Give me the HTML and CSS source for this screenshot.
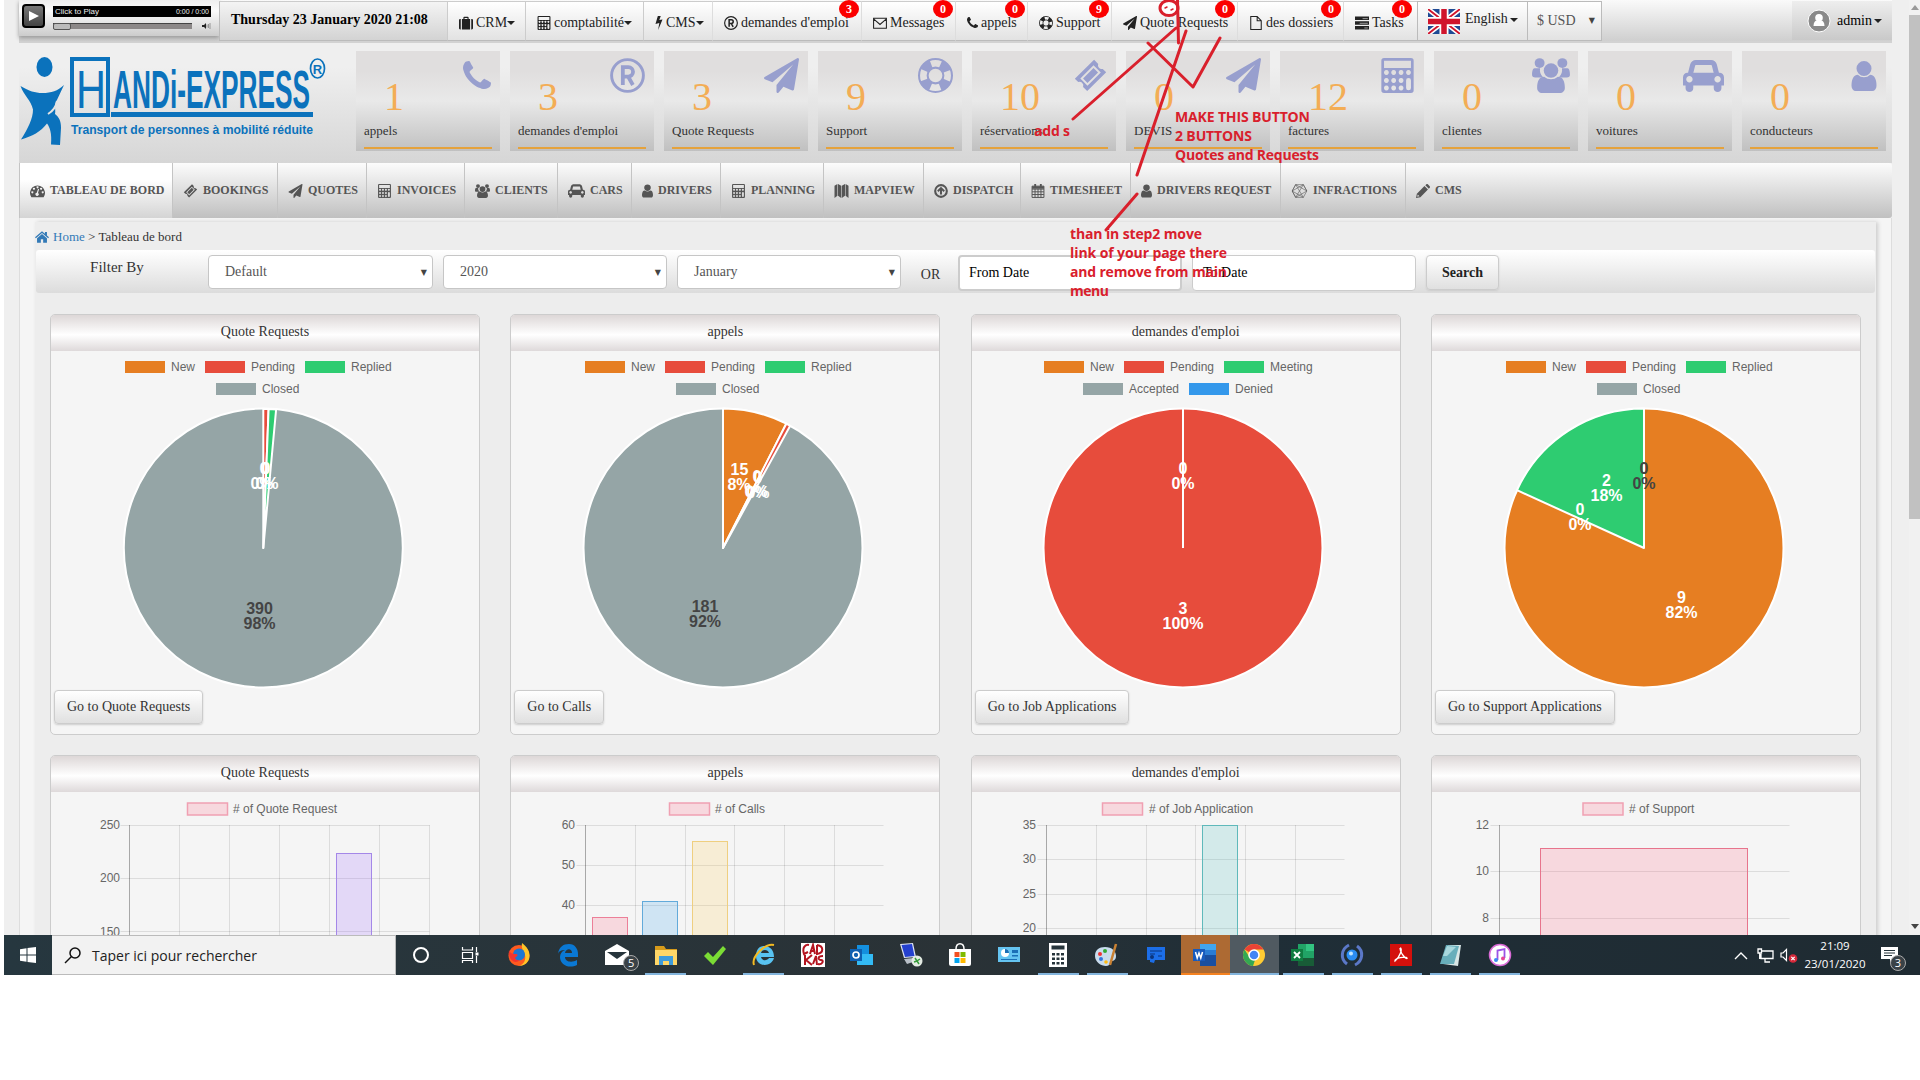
FILE: index.html
```html
<!DOCTYPE html>
<html lang="fr">
<head>
<meta charset="utf-8">
<title>Tableau de bord</title>
<link rel="stylesheet" href="styles.css">
</head>
<body>
<svg class="sprite" aria-hidden="true">
  <symbol id="phone" viewBox="192 128 1408 1408"><path d="M1600 1240q0 27-10 70.5t-21 68.5q-21 50-122 106-94 51-186 51-27 0-53-3.5t-57.5-12.5-47-14.5-55.5-20.5-49-18q-98-35-175-83-127-79-264-216t-216-264q-48-77-83-175-3-9-18-49t-20.5-55.5-14.5-47-12.5-57.5-3.5-53q0-92 51-186 56-101 106-122 25-11 68.5-21t70.5-10q14 0 21 3 18 6 53 76 11 19 30 54t35 63.5 31 53.5q3 4 17.5 25t21.5 35.5 7 28.5q0 20-28.5 50t-62 55-62 53-28.5 46q0 9 5 22.5t8.5 20.5 14 24 11.5 19q76 137 174 235t235 174q2 1 19 11.5t24 14 20.5 8.5 22.5 5q18 0 46-28.5t53-62 55-62 50-28.5q14 0 28.5 7t35.5 21.5 25 17.5q25 15 53.5 31t63.5 35 54 30q70 35 76 53 3 7 3 21z"/></symbol>
  <symbol id="plane" viewBox="0 0 1792 1792"><path d="M1764 11q33 24 27 64l-256 1536q-5 29-32 45-14 8-31 8-11 0-24-5l-453-185-242 295q-18 23-49 23-13 0-22-4-19-7-30.5-23.5t-11.5-36.5v-349l864-1059-1069 925-395-162q-37-14-40-55-2-40 32-59l1664-960q15-9 32-9 20 0 36 11z"/></symbol>
  <symbol id="user" viewBox="256 128 1280 1536"><path d="M1536 1399q0 109-62.5 187t-150.5 78h-854q-88 0-150.5-78t-62.5-187q0-85 8.5-160.5t31.5-152 58.5-131 94-89 134.5-34.5q131 128 313 128t313-128q76 0 134.5 34.5t94 89 58.5 131 31.5 152 8.5 160.5zm-256-887q0 159-112.5 271.5t-271.5 112.5-271.5-112.5-112.5-271.5 112.5-271.5 271.5-112.5 271.5 112.5 112.5 271.5z"/></symbol>
  <symbol id="car" viewBox="0 128 2048 1600"><path d="M480 1088q0-66-47-113t-113-47-113 47-47 113 47 113 113 47 113-47 47-113zm36-320h1016l-89-357q-2-8-14-17.5t-21-9.5h-768q-9 0-21 9.5t-14 17.5zm1372 320q0-66-47-113t-113-47-113 47-47 113 47 113 113 47 113-47 47-113zm160-96v384q0 14-9 23t-23 9h-96v128q0 80-56 136t-136 56-136-56-56-136v-128h-1024v128q0 80-56 136t-136 56-136-56-56-136v-128h-96q-14 0-23-9t-9-23v-384q0-93 65.5-158.5t158.5-65.5h28l105-419q23-94 104-157.5t179-63.5h768q98 0 179 63.5t104 157.5l105 419h28q93 0 158.5 65.5t65.5 158.5z"/></symbol>
  <symbol id="reg" viewBox="0 0 24 24"><circle cx="12" cy="12" r="10.9" fill="none" stroke="currentColor" stroke-width="2"/><path fill="none" stroke="currentColor" stroke-width="2.6" d="M8.8 18.5V6.3h3.8a3 3 0 0 1 0 6.4H8.8M12.4 12.7l3.3 5.8"/></symbol>
  <symbol id="ring" viewBox="0 0 24 24"><circle cx="12" cy="12" r="11.3" fill="none" stroke="currentColor" stroke-width="1.4"/><circle cx="12" cy="12" r="5.4" fill="none" stroke="currentColor" stroke-width="1.4"/><circle cx="12" cy="12" r="8.4" fill="none" stroke="currentColor" stroke-width="6" stroke-dasharray="6.6 6.594" stroke-dashoffset="-3.3"/></symbol>
  <symbol id="ticket" viewBox="0 0 24 24"><path fill-rule="evenodd" d="M14.6.6l3 3a2.7 2.7 0 0 0 3.3 3.6l2.5 2.4L9.6 23.3l-3-3a2.7 2.7 0 0 0-3.5-3.5L.6 14.3zM14.2 4.6L4.6 14.2l5.2 5.3 9.7-9.7zM14.2 6.6l3.3 3.2-7.7 7.7-3.2-3.3z"/></symbol>
  <symbol id="calc" viewBox="0 0 24 26"><path fill-rule="evenodd" d="M2 0h20a2 2 0 0 1 2 2v22a2 2 0 0 1-2 2H2a2 2 0 0 1-2-2V2a2 2 0 0 1 2-2zM2 2v5.4h20V2zM3.7 9a1.8 1.8 0 1 0 .1 0zM9.1 9a1.8 1.8 0 1 0 .1 0zM14.6 9a1.8 1.8 0 1 0 .1 0zM20.1 9a1.8 1.8 0 1 0 .1 0zM3.7 14.9a1.8 1.8 0 1 0 .1 0zM9.1 14.9a1.8 1.8 0 1 0 .1 0zM14.6 14.9a1.8 1.8 0 1 0 .1 0zM18.4 16.6a1.8 1.8 0 0 1 3.6 0v5.6a1.8 1.8 0 0 1-3.6 0zM3.7 20.5a1.8 1.8 0 1 0 .1 0zM9.1 20.5a1.8 1.8 0 1 0 .1 0zM14.6 20.5a1.8 1.8 0 1 0 .1 0z"/></symbol>
  <symbol id="group" viewBox="0 0 26 24"><circle cx="5.2" cy="3.5" r="3.4"/><circle cx="20.8" cy="3.5" r="3.4"/><path d="M1.700 7h3.800a7 7 0 0 0 2.200 6.300H2.200C.8 13.300 0 12.600 0 11.400 0 9.300.5 7 1.700 7zM24.300 7h-3.800a7 7 0 0 1-2.200 6.300h5.500c1.400 0 2.200-.7 2.200-1.900 0-2.100-.5-4.400-1.700-4.400z"/><circle cx="13" cy="8.600" r="5"/><path d="M8.300 12.800c2.700 2.300 6.700 2.300 9.400 0 3.500 0 4.800 3.200 4.800 7.600 0 2.200-1.400 3.600-3.500 3.600H7c-2.100 0-3.500-1.400-3.500-3.600 0-4.400 1.300-7.600 4.800-7.600z"/></symbol>
  <symbol id="case" viewBox="0 0 24 22"><path fill-rule="evenodd" d="M0 6a2 2 0 0 1 2-2h1v18H2a2 2 0 0 1-2-2zM5 4h2.500V2A1.700 1.700 0 0 1 9.200.3h5.600A1.700 1.700 0 0 1 16.500 2v2H19v18H5zM9.500 2.300V4h5V2.300zM21 4h1a2 2 0 0 1 2 2v14a2 2 0 0 1-2 2h-1z"/></symbol>
  <symbol id="bolt" viewBox="0 0 12 24"><path d="M4 0h5L6.500 7 12 5.800 4.500 24l2-12L0 13.500z"/></symbol>
  <symbol id="mail" viewBox="0 0 24 20"><path fill="none" stroke="currentColor" stroke-width="1.800" d="M1 2h22v17H1zM1 3l11 9.500L23 3"/></symbol>
  <symbol id="file" viewBox="0 0 20 24"><path fill="none" stroke="currentColor" stroke-width="1.800" d="M1 1h11l7 7v15H1zM12 1v7h7"/></symbol>
  <symbol id="tasks" viewBox="0 0 24 22"><path d="M0 0h24v6H0zM0 8h24v6H0zM0 16h24v6H0z"/><path stroke="#eee" d="M13 3.500h9M8 11.500h14M16 19.500h6"/></symbol>
  <symbol id="gauge" viewBox="0 0 24 21"><path fill-rule="evenodd" d="M2.200 20.500A12 12 0 1 1 21.800 20.500zM3.700 11a1.600 1.600 0 1 0 .1 0zM6.300 5.300a1.600 1.600 0 1 0 .1 0zM12 2.800a1.600 1.600 0 1 0 .1 0zM17.700 5.300a1.600 1.600 0 1 0 .1 0zM20.300 11a1.600 1.600 0 1 0 .1 0zM13 7l-2.200 6.200a2.600 2.600 0 1 0 2 .4L14.500 7.500z"/></symbol>
  <symbol id="map" viewBox="0 0 24 24"><path d="M0 3l5-3v20l-5 4zM6 0l5.500 3v21L6 20zM12.500 3L18 0v20l-5.500 4zM19 0l5 3v21l-5-4z"/></symbol>
  <symbol id="up" viewBox="0 0 24 24"><circle cx="12" cy="12" r="10" fill="none" stroke="currentColor" stroke-width="3.600"/><path fill="none" stroke="currentColor" stroke-width="3.400" d="M6.500 12.500L12 7l5.500 5.500M12 8v10"/></symbol>
  <symbol id="cal" viewBox="0 0 24 26"><path fill="none" stroke="currentColor" stroke-width="1.800" d="M1 4h22v21H1zM1 9.500h22M1 14.500h22M1 19.500h22M6.500 9v16M12 9v16M17.500 9v16"/><path d="M1 4h22v5H1zM5 0h3.500v7H5zM15.500 0H19v7h-3.500z"/></symbol>
  <symbol id="hex" viewBox="0 0 24 22"><path fill="none" stroke="currentColor" stroke-width=".9" d="M6 1h12l5.500 10L18 21H6L.5 11zM6 1l12 20M18 1L6 21M.5 11L18 1l5.500 10L6 21zM6 1L.5 11 18 21M6 1l17.500 10"/></symbol>
  <symbol id="pencil" viewBox="0 0 24 24"><path fill-rule="evenodd" d="M0 24l1.500-7.500L14.500 3.500l6 6-13 13zM16 2l1.700-1.500a2 2 0 0 1 2.600 0l3.200 3.200a2 2 0 0 1 0 2.600L22 8zM3 18l-1 4 4-1z"/></symbol>
  <symbol id="home" viewBox="0 0 24 20"><path d="M12 0l5 4.300V1.500h3.500v5.800L24 10.500l-1.500 1.600L12 3 1.500 12.100 0 10.500zM12 5l8.500 7.300V20H14v-6h-4v6H3.500v-7.700z"/></symbol>
</svg>

<div class="desktop">
  <div class="browser">
    <div class="page">
      <div class="topbar">
        <div class="player">
          <span class="play"></span>
          <div class="deck">
            <div class="display"><span>Click to Play</span><span>0:00 / 0:00</span></div>
            <div class="track"><span class="rail"><i></i></span><svg width="9" height="8" viewBox="0 0 9 8"><path d="M0 3h2l2-2v6L2 5H0z" fill="#222"/><path d="M5 2.500v3M6.500 2v4M8 1v6" stroke="#777" stroke-width=".7"/></svg></div>
          </div>
        </div>
        <div class="date">Thursday 23 January 2020 21:08</div>
        <a class="item"><svg class="ic"><use href="#case"/></svg>CRM<b class="caret"></b></a>
        <a class="item"><svg class="ic"><use href="#calc"/></svg>comptabilité<b class="caret"></b></a>
        <a class="item"><svg class="ic thin"><use href="#bolt"/></svg>CMS<b class="caret"></b></a>
        <a class="item soft"><svg class="ic"><use href="#reg"/></svg>demandes d'emploi<em>3</em></a>
        <a class="item soft"><svg class="ic"><use href="#mail"/></svg>Messages<em>0</em></a>
        <a class="item soft"><svg class="ic small"><use href="#phone"/></svg>appels<em>0</em></a>
        <a class="item soft"><svg class="ic"><use href="#ring"/></svg>Support<em>9</em></a>
        <a class="item soft"><svg class="ic"><use href="#plane"/></svg>Quote Requests<em>0</em></a>
        <a class="item soft"><svg class="ic"><use href="#file"/></svg>des dossiers<em>0</em></a>
        <a class="item soft"><svg class="ic"><use href="#tasks"/></svg>Tasks<em class="in">0</em></a>
        <a class="item lang"><svg class="flag" viewBox="0 0 32 25"><path fill="#1f4a94" d="M0 0h32v25H0z"/><path stroke="#fff" stroke-width="5" d="M0 0l32 25M32 0L0 25"/><path stroke="#d0142c" stroke-width="1.800" d="M0 0l32 25M32 0L0 25"/><path stroke="#fff" stroke-width="9" d="M16 0v25M0 12.500h32"/><path stroke="#d0142c" stroke-width="5.500" d="M16 0v25M0 12.500h32"/></svg><span>English<b class="caret"></b></span></a>
        <a class="item usd">$ USD<i>▼</i></a>
        <span></span>
        <a class="admin"><svg width="24" height="24" viewBox="0 0 24 24"><circle cx="12" cy="12" r="11" fill="#8a8a8a" stroke="#fff"/><circle cx="12" cy="8.700" r="3.800" fill="#fff"/><path fill="#fff" d="M6.500 17c0-3.500 1.500-5.500 3.500-5.500h4c2 0 3.500 2 3.500 5.500z"/></svg>admin<b class="caret"></b></a>
      </div>

      <div class="header">
        <svg class="logo" viewBox="0 0 310 100" width="310" height="100" fill="#0b72bc">
          <ellipse cx="25.500" cy="17" rx="8" ry="10"/>
          <path d="M1.500 36c9 5 14 7 22 7 9 0 15-2 21.500-8l-8 17c-2 5 0 8-1 12 4 3 6 7 6 14l-1 17-9-.500c1-11-1-17-4-21-6 8-15 13-26 16 7-11 12-21 12-30C12 50 5 46 1.500 36z"/>
          <path d="M38 51c-1 6-4 10-9 13" fill="none" stroke="#e4e4e4" stroke-width="2"/>
          <path d="M53 9h36v56H53z" fill="none" stroke="#0b72bc" stroke-width="4"/>
          <text x="57" y="58" class="logo-h" textLength="30" lengthAdjust="spacingAndGlyphs">H</text>
          <text x="94" y="58" class="logo-t" textLength="197" lengthAdjust="spacingAndGlyphs">ANDi-EXPRESS</text>
          <path d="M92 62h202v5H92z"/>
          <ellipse cx="298.500" cy="18.500" rx="7" ry="9.500" fill="none" stroke="#0b72bc" stroke-width="1.700"/>
          <text x="298.500" y="24" class="logo-r" text-anchor="middle">R</text>
          <text x="52" y="84" class="logo-s" textLength="242" lengthAdjust="spacingAndGlyphs">Transport de personnes à mobilité réduite</text>
        </svg>
        <div class="tiles">
          <div class="tile"><svg class="big p28"><use href="#phone"/></svg><strong>1</strong><span>appels</span></div>
          <div class="tile"><svg class="big"><use href="#reg"/></svg><strong>3</strong><span>demandes d'emploi</span></div>
          <div class="tile"><svg class="big"><use href="#plane"/></svg><strong>3</strong><span>Quote Requests</span></div>
          <div class="tile"><svg class="big"><use href="#ring"/></svg><strong>9</strong><span>Support</span></div>
          <div class="tile"><svg class="big t32"><use href="#ticket"/></svg><strong>10</strong><span>réservations</span></div>
          <div class="tile"><svg class="big"><use href="#plane"/></svg><strong>0</strong><span>DEVIS</span></div>
          <div class="tile"><svg class="big c33"><use href="#calc"/></svg><strong>12</strong><span>factures</span></div>
          <div class="tile"><svg class="big g38"><use href="#group"/></svg><strong>0</strong><span>clientes</span></div>
          <div class="tile"><svg class="big v40"><use href="#car"/></svg><strong>0</strong><span>voitures</span></div>
          <div class="tile"><svg class="big u28"><use href="#user"/></svg><strong>0</strong><span>conducteurs</span></div>
        </div>
      </div>

      <nav class="nav">
        <a class="on"><svg class="ni w16"><use href="#gauge"/></svg>TABLEAU DE BORD</a>
        <a><svg class="ni w16"><use href="#ticket"/></svg>BOOKINGS</a>
        <a><svg class="ni w16"><use href="#plane"/></svg>QUOTES</a>
        <a><svg class="ni w16"><use href="#calc"/></svg>INVOICES</a>
        <a><svg class="ni w16"><use href="#group"/></svg>CLIENTS</a>
        <a><svg class="ni w17"><use href="#car"/></svg>CARS</a>
        <a><svg class="ni w12"><use href="#user"/></svg>DRIVERS</a>
        <a><svg class="ni w16"><use href="#calc"/></svg>PLANNING</a>
        <a><svg class="ni w16"><use href="#map"/></svg>MAPVIEW</a>
        <a><svg class="ni w14"><use href="#up"/></svg>DISPATCH</a>
        <a><svg class="ni w15"><use href="#cal"/></svg>TIMESHEET</a>
        <a><svg class="ni w12"><use href="#user"/></svg>DRIVERS REQUEST</a>
        <a><svg class="ni w17"><use href="#hex"/></svg>INFRACTIONS</a>
        <a><svg class="ni w14"><use href="#pencil"/></svg>CMS</a>
      </nav>

      <div class="frame">
        <div class="content">
          <div class="crumbs"><svg width="14" height="12"><use href="#home"/></svg><a>Home</a> &gt; Tableau de bord</div>
          <div class="filter">
            <span class="by">Filter By</span>
            <span class="select s1">Default<i>▼</i></span>
            <span class="select s2">2020<i>▼</i></span>
            <span class="select s3">January<i>▼</i></span>
            <span class="or">OR</span>
            <span class="field">From Date</span>
            <span class="field to">To Date</span>
            <span class="search">Search</span>
          </div>

          <div class="cards">
            <section class="card">
              <h2>Quote Requests</h2>
              <svg class="pie" width="428" height="338">
                <g class="legend"><rect x="74" y="10" width="40" height="12" fill="#e67e22"/><text x="120" y="20">New</text><rect x="154" y="10" width="40" height="12" fill="#e74c3c"/><text x="200" y="20">Pending</text><rect x="254" y="10" width="40" height="12" fill="#2ecc71"/><text x="300" y="20">Replied</text><rect x="165" y="32" width="40" height="12" fill="#95a5a6"/><text x="211" y="42">Closed</text></g>
                <g transform="translate(212.300 197)" class="slices"><circle r="139.500" fill="#95a5a6"/><path fill="#e74c3c" d="M0 0V-139L5.300-138.900z"/><path fill="#2ecc71" d="M0 0L5.300-138.900 12.800-138.400z"/></g>
                <g class="vals"><text x="213" y="123">0</text><text x="211" y="138">0%</text><text x="215" y="123">0</text><text x="216" y="138">0%</text><g class="dk"><text x="208.500" y="263">390</text><text x="208.500" y="278">98%</text></g></g>
              </svg>
              <a class="go">Go to Quote Requests</a>
            </section>
            <section class="card">
              <h2>appels</h2>
              <svg class="pie" width="428" height="338">
                <g class="legend"><rect x="74" y="10" width="40" height="12" fill="#e67e22"/><text x="120" y="20">New</text><rect x="154" y="10" width="40" height="12" fill="#e74c3c"/><text x="200" y="20">Pending</text><rect x="254" y="10" width="40" height="12" fill="#2ecc71"/><text x="300" y="20">Replied</text><rect x="165" y="32" width="40" height="12" fill="#95a5a6"/><text x="211" y="42">Closed</text></g>
                <g transform="translate(212 197)" class="slices"><circle r="139.500" fill="#95a5a6"/><path fill="#e67e22" d="M0 0V-139.500A139.500 139.500 0 0 1 63.300-124.300z"/><path fill="#e74c3c" d="M0 0L63.300-124.300 67.200-122.200z"/></g>
                <g class="vals"><text x="228.500" y="124">15</text><text x="228" y="139">8%</text><text x="246" y="131">0</text><text x="245" y="146">0%</text><text x="247" y="132">0</text><text x="247" y="147">0%</text><g class="dk"><text x="194" y="261">181</text><text x="194" y="276">92%</text></g></g>
              </svg>
              <a class="go">Go to Calls</a>
            </section>
            <section class="card">
              <h2>demandes d'emploi</h2>
              <svg class="pie" width="428" height="338">
                <g class="legend"><rect x="72" y="10" width="40" height="12" fill="#e67e22"/><text x="118" y="20">New</text><rect x="152" y="10" width="40" height="12" fill="#e74c3c"/><text x="198" y="20">Pending</text><rect x="252" y="10" width="40" height="12" fill="#2ecc71"/><text x="298" y="20">Meeting</text><rect x="111" y="32" width="40" height="12" fill="#95a5a6"/><text x="157" y="42">Accepted</text><rect x="217" y="32" width="40" height="12" fill="#3498eb"/><text x="263" y="42">Denied</text></g>
                <g transform="translate(211 197)" class="slices"><circle r="139.500" fill="#e74c3c"/><path d="M0 0V-139"/></g>
                <g class="vals"><text x="211" y="123">0</text><text x="211" y="138">0%</text><text x="211" y="263">3</text><text x="211" y="278">100%</text></g>
              </svg>
              <a class="go">Go to Job Applications</a>
            </section>
            <section class="card">
              <h2></h2>
              <svg class="pie" width="428" height="338">
                <g class="legend"><rect x="74" y="10" width="40" height="12" fill="#e67e22"/><text x="120" y="20">New</text><rect x="154" y="10" width="40" height="12" fill="#e74c3c"/><text x="200" y="20">Pending</text><rect x="254" y="10" width="40" height="12" fill="#2ecc71"/><text x="300" y="20">Replied</text><rect x="165" y="32" width="40" height="12" fill="#95a5a6"/><text x="211" y="42">Closed</text></g>
                <g transform="translate(212 197)" class="slices"><circle r="139.500" fill="#e67e22"/><path fill="#2ecc71" d="M0 0L-127-57.800A139.500 139.500 0 0 1 0-139.500z"/></g>
                <g class="vals"><text x="174.500" y="135">2</text><text x="174.500" y="150">18%</text><text x="148" y="164">0</text><text x="148" y="179">0%</text><text x="249.500" y="252">9</text><text x="249.500" y="267">82%</text><g class="dk"><text x="212" y="123">0</text><text x="212" y="138">0%</text></g></g>
              </svg>
              <a class="go">Go to Support Applications</a>
            </section>

            <section class="card">
              <h2>Quote Requests</h2>
              <svg class="bars" width="428" height="337">
                <rect class="key" x="136.500" y="10" width="40" height="12"/><text x="182" y="20">#  of Quote Request</text>
                <path class="grid" d="M69.500 32.500h309M69.500 85.500h309M69.500 138.500h309M128.500 32v300M178.500 32v300M228.500 32v300M278.500 32v300M328.500 32v300M378.500 32v300"/><path class="axis" d="M78.500 32v300"/>
                <g class="ticks"><text x="69" y="36">250</text><text x="69" y="89">200</text><text x="69" y="143">150</text></g>
                <rect x="285.500" y="60.500" width="35" height="290" fill="#9966ff33" stroke="#a487e8"/>
              </svg>
            </section>
            <section class="card">
              <h2>appels</h2>
              <svg class="bars" width="428" height="337">
                <rect class="key" x="158.500" y="10" width="40" height="12"/><text x="204" y="20">#  of Calls</text>
                <path class="grid" d="M65.500 32.500h307M65.500 72.500h307M65.500 112.500h307M124.500 32v300M174.500 32v300M223.500 32v300M273.500 32v300M323.500 32v300"/><path class="axis" d="M74.500 32v300"/>
                <g class="ticks"><text x="64" y="36">60</text><text x="64" y="76">50</text><text x="64" y="116">40</text></g>
                <rect x="81.500" y="124.500" width="35" height="290" fill="#ff638433" stroke="#ec7f98"/><rect x="131.500" y="108.500" width="35" height="290" fill="#36a2eb33" stroke="#62aada"/><rect x="181.500" y="48.500" width="35" height="290" fill="#ffce5633" stroke="#efcf80"/>
              </svg>
            </section>
            <section class="card">
              <h2>demandes d'emploi</h2>
              <svg class="bars" width="428" height="337">
                <rect class="key" x="130.500" y="10" width="40" height="12"/><text x="177" y="20">#  of Job Application</text>
                <path class="grid" d="M65.500 32.500h307M65.500 66.500h307M65.500 101.500h307M65.500 135.500h307M124.500 32v300M174.500 32v300M223.500 32v300M273.500 32v300M323.500 32v300"/><path class="axis" d="M74.500 32v300"/>
                <g class="ticks"><text x="64" y="36">35</text><text x="64" y="70">30</text><text x="64" y="105">25</text><text x="64" y="139">20</text></g>
                <rect x="230.500" y="32.500" width="35" height="310" fill="#4bc0c033" stroke="#5fb9bb"/>
              </svg>
            </section>
            <section class="card">
              <h2></h2>
              <svg class="bars" width="428" height="337">
                <rect class="key" x="151" y="10" width="40" height="12"/><text x="197" y="20">#  of Support</text>
                <path class="grid" d="M58.500 32.500h299M58.500 78.500h299M58.500 125.500h299"/><path class="axis" d="M67.500 32v300"/>
                <g class="ticks"><text x="57" y="36">12</text><text x="57" y="82">10</text><text x="57" y="129">8</text></g>
                <rect x="108.500" y="55.500" width="207" height="290" fill="#ff638433" stroke="#e7748c"/>
              </svg>
            </section>
          </div>
        </div>
      </div>
    </div>
    <div class="scroll"><i class="arr"></i><div class="thumb"></div><i class="arr down"></i></div>
  </div>

  <div class="taskbar">
    <div class="start"><svg width="16" height="16" viewBox="0 0 16 16" fill="#fff"><path d="M0 2.200l6.500-.900v6.200H0zM7.500 1.100L16 0v7.500H7.500zM0 8.500h6.500v6.200L0 13.800zM7.500 8.500H16V16l-8.500-1.100z"/></svg></div>
    <div class="find"><svg width="17" height="17" viewBox="0 0 17 17" fill="none" stroke="#111" stroke-width="1.500"><circle cx="11" cy="6" r="5"/><path d="M7.500 9.500L1 16"/></svg>Taper ici pour rechercher</div>
    <div class="app"><svg viewBox="0 0 24 24"><circle cx="12" cy="12" r="7" fill="none" stroke="#fff" stroke-width="2"/></svg></div>
    <div class="app"><svg viewBox="0 0 24 24" fill="none" stroke="#fff" stroke-width="1.200"><path d="M4.500 4v3h10V4M4.500 9.500h10v6h-10zM4.500 20v-2.500h10V20M18.500 4v5M18.500 13v7"/><path d="M17.500 9.500h3v3h-3z" fill="#fff" stroke="none"/></svg></div>
    <div class="app"><svg viewBox="0 0 24 24"><circle cx="12" cy="12.500" r="10.500" fill="#ff5a1f"/><path fill="#ffc528" d="M15 0c5 4 8 8 7.500 14-.5 5-5 9-10.500 9 5-2 7-6 6-11-1-4-4-6-3-12z"/><circle cx="12" cy="11.500" r="6" fill="#1b77d3"/><path fill="#f1352f" d="M2 7c1 3 3 4 7 4 2 0 2 2 0 3s0 4 4 3c-5 5-12 0-11-10z"/></svg></div>
    <div class="app"><svg viewBox="0 0 24 24"><path fill="#0a78d4" d="M2 11C3 4 7 1 13 1c6 0 9 5 9 10v3H9c0 5 7 6 12 3v5c-8 4-17 0-17-8 0-3 2-6 5-7-4 0-6 1-7 4zm7-1h7c0-5-6-5-7 0z"/></svg></div>
    <div class="app"><svg viewBox="0 0 24 24"><path fill="#fff" d="M0 8l12-7 12 7v14H0z"/><path fill="#26343b" d="M2 9h20l-10 7z"/></svg><b class="count">5</b></div>
    <div class="app run"><svg viewBox="0 0 24 24"><path fill="#d79b1b" d="M1 3h9l2 3h11v5H1z"/><path fill="#ffd768" d="M1 7h22v15H1z"/><path fill="#3e9cdc" d="M5 13h14v9h-4v-4H9v4H5z"/></svg></div>
    <div class="app"><svg viewBox="0 0 24 24"><path fill="#7bdc35" d="M1 13l4-4 5 5L20 3l3 3-13 16z"/></svg></div>
    <div class="app run"><svg viewBox="0 0 24 24"><path fill="#58c3f2" d="M12 3c7 0 10 5 10 11H9c1 4 6 4 8 1h5c-3 10-18 9-18-2C4 7 7 3 12 3zM9 10h8c-1-4-7-4-8 0z"/><path fill="none" stroke="#f3ba22" stroke-width="2" d="M2 22C-1 14 13 0 22 2"/></svg></div>
    <div class="app"><svg viewBox="0 0 24 24"><path fill="#fff" d="M0 0h24v24H0z"/><g fill="none" stroke="#b31420" stroke-width="2"><path d="M8 2C4 1 1 5 3 11l4-2M9 11l3-9 2 9M9 8h5M16 2v9c7-1 7-8 0-9M4 12v10M11 12l-6 5 6 5M12 21l3-8 1 9M22 13c-6 0-5 4-2 4s2 5-3 4"/></g></svg></div>
    <div class="app"><svg viewBox="0 0 24 24"><path fill="#1490df" d="M7 2h12v12H7z"/><path fill="#33bbf5" d="M7 11h16v11H7z"/><path fill="#0f5fb0" d="M0 6h12v12H0z"/><circle cx="6" cy="12" r="3" fill="none" stroke="#fff" stroke-width="1.700"/></svg></div>
    <div class="app"><svg viewBox="0 0 24 24"><path fill="#dfe5f4" d="M1 1l13-1 3 14-12 1z"/><path fill="#2440cf" d="M2.500 2l10.500-1 2.500 12-9.500 1z"/><path fill="#b9c0c8" d="M5 16l10-1 2 3-9 3z"/><circle cx="18" cy="18" r="5.500" fill="#e4ebe4"/><path stroke="#369a3a" stroke-width="1.500" fill="none" d="M15 19l3-1-2-3M21 16l-3 2 2 3"/></svg></div>
    <div class="app"><svg viewBox="0 0 24 24"><path fill="#fff" d="M1 6h22v15q0 2-2 2H3q-2 0-2-2z"/><path fill="none" stroke="#fff" stroke-width="1.500" d="M8 6c0-7 8-7 8 0"/><path fill="#f25022" d="M6.500 9h5v5h-5z"/><path fill="#7fba00" d="M12.500 9h5v5h-5z"/><path fill="#00a4ef" d="M6.500 15h5v5h-5z"/><path fill="#ffb900" d="M12.500 15h5v5h-5z"/></svg></div>
    <div class="app"><svg viewBox="0 0 24 24"><path fill="#65c4f1" d="M1 4h22v15H1z"/><circle cx="8" cy="10" r="4" fill="#fff"/><path fill="#1b6fb6" d="M8 10V6a4 4 0 0 1 4 4zM15 7h6v3h-6zM15 12h6v1.500h-6zM4 16h16v1H4z"/></svg></div>
    <div class="app run"><svg viewBox="0 0 24 24"><path fill="#fff" d="M3 0h18v24H3z"/><path fill="#26343b" d="M5.500 2.500h13v4h-13zM6 10h3v2.500H6zM10.500 10h3v2.500h-3zM15 10h3v2.500h-3zM6 14.500h3V17H6zM10.500 14.500h3V17h-3zM15 14.500h3V17h-3zM6 19h3v2.500H6zM10.500 19h3v2.500h-3zM15 19h3v2.500h-3z"/></svg></div>
    <div class="app run"><svg viewBox="0 0 24 24"><path fill="#c8dced" d="M10 4c7 0 11 4 11 9s-4 5-5 5 0 5-5 5S0 19 0 13s4-9 10-9z"/><circle cx="5" cy="11" r="2" fill="#e33"/><circle cx="10" cy="8" r="2" fill="#3a3"/><circle cx="6" cy="16" r="2" fill="#37d"/><circle cx="11" cy="19" r="1.800" fill="#fb1"/><path stroke="#c98133" stroke-width="2.500" d="M21 1L15 22"/></svg></div>
    <div class="app"><svg viewBox="0 0 24 24"><path fill="#1c6ee8" d="M3 4h18v13H11l-1 3-4-1v-2H3z"/><path stroke="#0b357c" d="M6 8h12M6 11h5M14 13h4" fill="none"/><circle cx="8" cy="14" r="2" fill="#0b357c"/></svg></div>
    <div class="app word"><svg viewBox="0 0 24 24"><path fill="#2b7cd3" d="M7 1h16v11H7z"/><path fill="#1a4fa0" d="M7 12h16v11H7z"/><path fill="#41a5ee" d="M7 1h16v6H7z"/><path fill="#185abd" d="M0 6h12v12H0z"/><path fill="none" stroke="#fff" stroke-width="1.500" d="M2.500 9l1.700 6L6 10l1.800 5 1.700-6"/></svg></div>
    <div class="app chrome run"><svg viewBox="0 0 24 24"><circle cx="12" cy="12" r="11" fill="#fc3"/><path fill="#ea4335" d="M12 12L2.500 6.500A11 11 0 0 1 21.500 6.500H12z"/><path fill="#34a853" d="M2.500 6.500L8 15l5 2-2 6A11 11 0 0 1 2.500 6.500z"/><circle cx="12" cy="12" r="5" fill="#4285f4" stroke="#fff" stroke-width="1.500"/></svg></div>
    <div class="app run"><svg viewBox="0 0 24 24"><path fill="#21a366" d="M7 1h16v22H7z"/><path fill="#33c481" d="M15 1h8v7h-8z"/><path fill="#185c37" d="M7 15h16v8H7z"/><path fill="#107c41" d="M0 6h12v12H0z"/><path stroke="#fff" stroke-width="1.800" d="M3 9l6 6M9 9l-6 6"/></svg></div>
    <div class="app run"><svg viewBox="0 0 24 24"><circle cx="12" cy="12" r="5.500" fill="#2b8df2"/><circle cx="11" cy="10.500" r="2" fill="#bfe4ff"/><path fill="none" stroke="#5b78c8" stroke-width="3" d="M9 2C1 6 0 16 7 21M15 22c8-4 9-14 2-19"/></svg></div>
    <div class="app run"><svg viewBox="0 0 24 24"><path fill="#d4100c" d="M1 1h22v22H1z"/><path fill="none" stroke="#fff" stroke-width="1.400" d="M11 5c3 0 0 9-5 13-1-3 11-5 12-3s-6-2-7-10"/></svg></div>
    <div class="app run"><svg viewBox="0 0 24 24"><path fill="#d8e6e6" d="M9 2h13l-3 21-15-2z"/><path fill="#68aebb" d="M7 2l13 1-5 18H1z"/><path fill="#a8d7dd" d="M8 3l9 1-9 9H4z"/></svg></div>
    <div class="app run"><svg viewBox="0 0 24 24"><circle cx="12" cy="12" r="10.500" fill="#fff" stroke="#d96ad6" stroke-width="1.500"/><path fill="none" stroke="#9b53e6" stroke-width="1.800" d="M9.500 17V7.500l7-1.500v9"/><circle cx="8" cy="17" r="2" fill="#3b8cf0"/><circle cx="15" cy="15.500" r="2" fill="#e64595"/></svg></div>
    <div class="tray">
      <svg width="14" height="9" viewBox="0 0 14 9"><path d="M1 8l6-6 6 6" fill="none" stroke="#fff" stroke-width="1.400"/></svg>
      <svg width="17" height="15" viewBox="0 0 17 15" fill="none" stroke="#fff" stroke-width="1.300"><path d="M5 3h11v7.500H4V6M8 11v3h5M1 1h3.500v4H1zM2.700 5v6"/></svg>
      <svg width="18" height="15" viewBox="0 0 18 15"><path d="M1 5h2l3.500-3.500v11L3 9H1z" fill="none" stroke="#fff" stroke-width="1.200"/><circle cx="13" cy="10.500" r="4.300" fill="#d6283a"/><path d="M11.300 8.800l3.400 3.400M14.700 8.800l-3.400 3.400" stroke="#fff" stroke-width="1.200"/></svg>
      <div class="clock"><span>21:09</span><span>23/01/2020</span></div>
      <div class="note"><svg width="17" height="16" viewBox="0 0 17 16"><path fill="#fff" d="M0 0h17v12h-5l-3 4v-4H0z"/><path stroke="#26343b" d="M3 3.500h11M3 6h11M3 8.500h8"/></svg><b class="count">3</b></div>
    </div>
  </div>

  <svg class="marks" width="400" height="310" viewBox="1000 0 400 310">
    <g fill="none" stroke="#d9202c" stroke-width="3" stroke-linecap="round" stroke-linejoin="round">
      <ellipse cx="1169" cy="8" rx="9" ry="7.500" fill="#fff"/>
      <path d="M1177.500 0l1 43M1176 28L1073 119M1148 43l45 44 27-49M1186 31L1137 175M1137 194l-31 36"/>
      <path d="M1165 8l2-1M1171 10l2-1" stroke-width="1.500"/>
    </g>
    <g class="memo">
      <text x="1034" y="136" textLength="36">add s</text>
      <text x="1175" y="122" textLength="135">MAKE THIS BUTTON</text>
      <text x="1175" y="141" textLength="77">2 BUTTONS</text>
      <text x="1175" y="160" textLength="144">Quotes and Requests</text>
      <text x="1070" y="239" textLength="132">than in step2 move</text>
      <text x="1070" y="258" textLength="157">link of your page there</text>
      <text x="1070" y="277" textLength="157">and remove from main</text>
      <text x="1070" y="296" textLength="39">menu</text>
    </g>
  </svg>
</div>
</body>
</html>
```
FILE: styles.css
```css
* { box-sizing: border-box; }
body { margin: 0; background: #fff; font: 14px "Liberation Serif", serif; color: #333; overflow: hidden; }
.sprite { display: none; }
svg { display: block; flex: none; }
svg:not([fill]) { fill: currentColor; }
.desktop { position: relative; margin-left: 4px; width: 1916px; height: 975px; display: flex; flex-direction: column; }
.browser { height: 935px; overflow: hidden; display: flex; background: #efefef; }
.page { width: 1873px; margin: 0 17px 0 15px; flex: none; }

.topbar { height: 43px; padding-top: 1px; display: grid; grid-template-columns: 200px 228px 78px 118px 69px 149px 94px 72px 84px 126px 106px 74px 110px 75px 1fr 100px; background: linear-gradient(#fafafa, #cfcfcf); border-bottom: 2px solid #d2d2d2; }
.player { height: 36px; margin-top: -1px; padding: 4px 8px 0 3px; display: flex; gap: 8px; background: linear-gradient(#eee, #fbfbfb 30%, #ccc); box-shadow: 0 2px 4px #999; }
.play { width: 23px; height: 24px; border: 2px solid #000; border-radius: 4px; background: linear-gradient(#777, #444); display: flex; align-items: center; justify-content: center; }
.play::before { content: ""; border: 5px solid transparent; border-left: 10px solid #fff; border-right: 0; }
.deck { flex: 1; padding-top: 2px; }
.display { height: 11px; padding: 0 2px; background: #000; color: #eee; font: 8px/11px "Liberation Sans", sans-serif; display: flex; justify-content: space-between; }
.display span:last-child { font-size: 7px; }
.track { display: flex; justify-content: space-between; margin-top: 5px; align-items: center; }
.rail { width: 139px; height: 6px; background: #8c8888; border-top: 1px solid #444; }
.rail i { display: block; width: 18px; height: 7px; margin-top: -1px; background: #bbb; border: 1px solid #555; border-radius: 2px; }
.date { height: 40px; padding: 0 0 2px 11px; border: 1px solid #bbb; border-right: 0; border-top-color: #ccc; color: #000; font-weight: bold; display: flex; align-items: center; background: linear-gradient(#f4f4f4, #d3d3d3); }
.item { position: relative; height: 40px; display: flex; align-items: center; padding: 3px 0 0 11px; gap: 3px; color: #222; border: 1px solid #ccc; border-bottom-color: #bbb; border-right: 0; background: linear-gradient(#fff, #e2e2e2); white-space: nowrap; }
.item.soft { border-left-color: #ddd; }
.item .caret { margin-left: -3px; }
.caret { display: inline-block; border: 4px solid transparent; border-top-color: #222; border-bottom: 0; vertical-align: middle; }
.ic { width: 14px; height: 14px; }
.ic.thin { width: 8px; }
.ic.small { width: 11px; height: 11px; }
.item em { position: absolute; top: -2px; right: 2px; width: 20px; height: 18px; border-radius: 50%; background: #fb0000; color: #fff; font: bold 12px/18px "Liberation Serif", serif; text-align: center; }
.item em.in { right: 5px; }
.lang { padding: 0 0 0 10px; gap: 5px; border-color: #bbb; }
.lang span { padding-bottom: 4px; }
.item.lang .caret { margin-left: 2px; }
.flag { width: 32px; height: 25px; }
.usd { padding: 0 6px 1px 9px; justify-content: space-between; border: 1px solid #bbb; color: #555; }
.usd i, .select i { font: 8px "DejaVu Sans", sans-serif; color: #444; }
.admin { display: flex; align-items: center; gap: 6px; padding: 0 0 0 15px; height: 39px; color: #000; background: linear-gradient(#eee, #c9c9c9); }
.admin .caret { margin-left: -4px; }

.header { height: 120px; display: flex; padding-top: 8px; background: linear-gradient(#efefef 20%, #d6d6d6); }
.logo { width: 310px; height: 100px; margin: -1px 27px 0 0; }
.logo-h { font: 53px "Liberation Sans", sans-serif; }
.logo-t { font: bold 53px "Liberation Sans Narrow", "Liberation Sans", sans-serif; }
.logo-r { font: bold 13px "Liberation Sans", sans-serif; }
.logo-s { font: bold 13.500px "Liberation Sans", sans-serif; }
.tiles { display: grid; grid-template-columns: repeat(10, 144px); gap: 10px; }
.tile { position: relative; height: 100px; padding: 23px 8px 0; background: linear-gradient(#e0dede 20%, #e9e9e9 50%, #c0c0c0); }
.tile strong { display: block; height: 49px; padding-left: 20px; font: 40px/45px "Liberation Serif", serif; color: #f3ad55; }
.tile span { display: block; height: 26px; line-height: 16px; font-size: 13px; border-bottom: 2px solid #e5a23c; }
.big { position: absolute; top: 7px; right: 9px; width: 35px; height: 35px; color: #989fce; }
.p28 { width: 28px; height: 28px; top: 10px; }
.t32 { width: 33px; height: 33px; top: 8px; }
.c33 { width: 33px; right: 10px; }
.g38 { width: 38px; right: 8px; }
.v40 { width: 41px; height: 32px; top: 9px; right: 8px; }
.u28 { width: 28px; height: 30px; top: 10px; right: 8px; }

.nav { height: 55px; display: grid; grid-template-columns: 153px 105px 89px 98px 93px 74px 89px 103px 100px 97px 110px 150px 125px 1fr; background: linear-gradient(#fcfcfc, #c0c0c0); border-radius: 3px; }
.nav a { display: flex; align-items: center; gap: 5px; padding: 0 0 0 10px; border-left: 1px solid #c4c4c4; font-size: 12px; font-weight: bold; color: #555; white-space: nowrap; }
.nav .on { background: linear-gradient(#fff 30%, #d4d4d4); }
.ni { height: 14px; }
.w12 { width: 11px; } .w14 { width: 14px; } .w15 { width: 14px; } .w16 { width: 15px; } .w17 { width: 17px; }

.frame { height: 900px; padding: 4px 15px 0; background: #f5f5f5; border: 1px solid #ddd; border-top: 0; }
.content { height: 900px; background: #ededed; box-shadow: 2px 0 4px #ccc; }
.crumbs { height: 28px; padding: 2px 0 0 0; display: flex; align-items: center; font-size: 13px; white-space: pre; }
.crumbs svg { color: #337ab7; margin-right: 4px; }
.crumbs a { color: #337ab7; }
.filter { margin: 0 1px; height: 43px; padding-top: 5px; display: flex; gap: 10px; background: linear-gradient(#fff, #dcdcdc); border-radius: 3px; }
.by { width: 162px; text-align: center; font-size: 15px; line-height: 24px; }
.select { height: 34px; padding: 0 5px 0 16px; display: flex; align-items: center; justify-content: space-between; background: #fff; border: 1px solid #c6c6c6; border-radius: 4px; color: #555; }
.s1 { width: 225px; } .s2 { width: 224px; } .s3 { width: 224px; }
.or { width: 37px; padding-left: 2px; text-align: center; line-height: 40px; }
.field { width: 224px; height: 36px; padding-left: 9px; line-height: 32px; background: #fff; border: 2px solid #ccc; border-radius: 4px; color: #000; }
.to { border-width: 1px; line-height: 34px; padding-left: 10px; }
.search { width: 73px; height: 35px; line-height: 33px; text-align: center; font-weight: bold; color: #222; border: 1px solid #ccc; border-radius: 4px; background: linear-gradient(#fff, #e0e0e0); box-shadow: 0 1px 2px #ccc; }

.cards { padding: 21px 15px 0 15px; display: grid; grid-template-columns: repeat(4, 430px); justify-content: space-between; row-gap: 20px; }
.card { height: 421px; border: 1px solid #ccc; border-radius: 5px; background: #f5f5f5; overflow: hidden; }
.card h2 { margin: 0; height: 36px; line-height: 34px; font-size: 14px; font-weight: normal; text-align: center; background: linear-gradient(#ddd7d7, #fff 55%, #ded9da); }
.go { display: inline-block; margin: 1px 0 0 3px; height: 34px; padding: 0 12px; line-height: 32px; border: 1px solid #ccc; border-radius: 4px; background: linear-gradient(#fff, #e0e0e0); box-shadow: 0 1px 2px #ccc; color: #333; }
.bars { margin-top: 1px; }
.legend text, .bars text { font: 12px "Liberation Sans", sans-serif; fill: #666; }
.slices > * { stroke: #fff; stroke-width: 2; stroke-linejoin: round; }
.vals { font: bold 16px "Liberation Sans", sans-serif; fill: #fff; text-anchor: middle; }
.dk { fill: #444; }
.key { fill: #ff638433; stroke: #f0a0b2; stroke-width: 1.500; }
.grid { stroke: #0000001a; fill: none; }
.axis { stroke: #00000050; }
.bars .ticks text { text-anchor: end; }

.scroll { width: 11px; flex: none; background: #f1f1f1; display: flex; flex-direction: column; align-items: center; justify-content: space-between; }
.arr { border: 4px solid transparent; border-top: 0; border-bottom: 5px solid #999; margin-top: 5px; }
.down { border-bottom: 0; border-top: 5px solid #444; margin: 0 0 6px; }
.thumb { width: 11px; height: 504px; margin: 5px 0 auto; background: #c1c1c1; }

.taskbar { height: 40px; display: flex; background: linear-gradient(90deg, #26373f, #2a3236 50%, #1f2e37 65%, #1f2b32); color: #fff; }
.start { width: 48px; display: flex; align-items: center; justify-content: center; }
.find { width: 344px; display: flex; align-items: center; gap: 11px; padding-left: 12px; background: #f2f2f2; border: 1px solid #bbb; border-left: 0; color: #222; font: 14px "Open Sans", sans-serif; }
.app { position: relative; width: 49.050px; display: flex; align-items: center; justify-content: center; flex: none; }
.app svg { width: 24px; height: 24px; }
.app.run { border-bottom: 2px solid #83b5dd; padding-top: 2px; margin: 0 4px; width: 41.050px; }
.app.word { background: #ad6a33; border-bottom: 2px solid #f58220; padding-top: 2px; }
.app.chrome { background: #505a61; margin: 0; width: 49.050px; }
.count { position: absolute; right: 2px; bottom: 4px; width: 16px; height: 16px; border-radius: 50%; border: 1px solid #aaa; background: #3a4247; font: 11px/14px "Open Sans", sans-serif; text-align: center; }
.tray { margin-left: auto; width: 186px; display: flex; align-items: center; font: 12px "Open Sans", sans-serif; }
.tray > svg { margin-right: 9px; }
.tray > svg:nth-of-type(2) { margin-right: 6px; }
.tray > svg:nth-of-type(3) { margin-right: 6px; }
.clock { width: 62px; display: flex; flex-direction: column; align-items: center; line-height: 18px; font-size: 11.500px; }
.note { position: relative; width: 27px; height: 40px; padding-top: 12px; margin-left: 15px; }
.marks { position: absolute; left: 996px; top: 0; }
.memo { font: bold 14px "Open Sans", sans-serif; fill: #d9202c; }
```
